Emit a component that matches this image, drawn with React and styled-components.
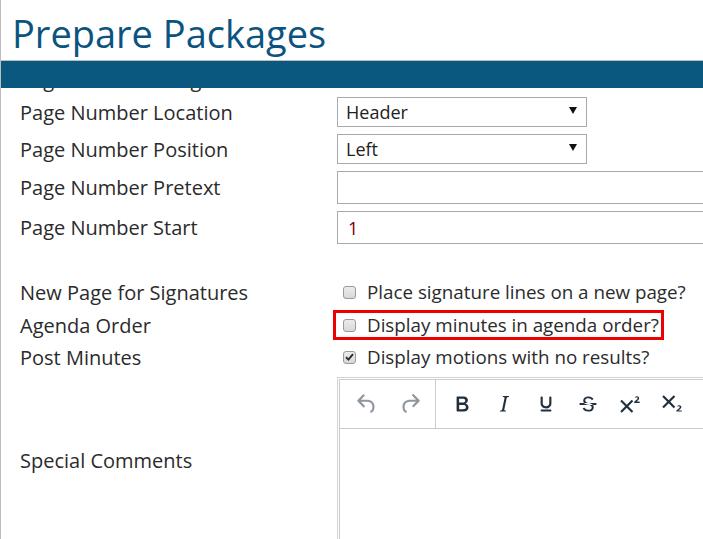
import React from "react";
import styled, { createGlobalStyle } from "styled-components";

const GlobalStyle = createGlobalStyle`
  html, body {
    margin: 0;
    padding: 0;
    background: #fff;
    overflow: hidden;
  }
  body {
    font-family: "Open Sans", "Noto Sans", sans-serif;
  }
`;

const Page = styled.div`
  height: 539px;
  border-left: 1px solid #bdbdbd;
  display: flex;
  flex-direction: column;
  overflow: hidden;
`;

const Header = styled.div`
  height: 60px;
  padding-left: 11px;
  box-sizing: border-box;
`;

const Title = styled.h1`
  margin: 0;
  padding-top: 7px;
  font-size: 38px;
  font-weight: 400;
  line-height: 52px;
  color: #0b5480;
  white-space: nowrap;
`;

const Bar = styled.div`
  height: 27px;
  flex: none;
  border-top: 1px solid #bdbdbd;
  background: #0a5780;
  position: relative;
  z-index: 1;
`;

const Scroll = styled.div`
  flex: 1;
  overflow: hidden;
`;

const Form = styled.div`
  margin-top: -24px;
  padding-left: 19px;
`;

const Row = styled.div`
  display: grid;
  grid-template-columns: 317px 1fr;
  grid-template-rows: ${(p) => p.$h}px;
  align-items: center;
  height: ${(p) => p.$h}px;
  margin-bottom: ${(p) => p.$gap || 0}px;
`;

const Label = styled.div`
  font-size: 20px;
  color: #2b2b2b;
  white-space: nowrap;
`;

const SelectBox = styled.div`
  width: 250px;
  height: 30px;
  box-sizing: border-box;
  border: 1px solid #a9a9a9;
  display: flex;
  align-items: center;
  justify-content: space-between;
  padding: 0 9px 0 8px;
  font-size: 18px;
  color: #222;
`;

const Caret = styled.span`
  width: 0;
  height: 0;
  border-left: 4px solid transparent;
  border-right: 4px solid transparent;
  border-top: 7px solid #111;
  margin-top: -4px;
`;

const TextInput = styled.input`
  width: 420px;
  height: 33px;
  box-sizing: border-box;
  border: 1px solid #a9a9a9;
  padding: 0 10px;
  font-family: "Open Sans", sans-serif;
  font-size: 18px;
  color: #7a0000;
  outline: none;
`;

const Option = styled.label`
  display: inline-flex;
  align-items: center;
  gap: 11px;
  justify-self: start;
  height: 30px;
  box-sizing: border-box;
  margin-left: -4px;
  padding: 0 2px 0 7px;
  border: 3px solid ${(p) => (p.$highlight ? "#ec0000" : "transparent")};
  font-size: 18.8px;
  color: #2b2b2b;
  white-space: nowrap;
`;

const Box = styled.span`
  width: 13px;
  height: 13px;
  box-sizing: border-box;
  border: 1px solid #9a9a9a;
  border-radius: 3px;
  background: linear-gradient(#ececec, #d8d8d8);
  display: flex;
  align-items: center;
  justify-content: center;
  flex: none;
`;

const Editor = styled.div`
  align-self: start;
  margin-top: 4px;
  height: 170px;
  width: 420px;
  box-sizing: border-box;
  border: 1px solid #d3d3d3;
  border-bottom: 0;
  padding: 1px 0 0 1px;
`;

const Toolbar = styled.div`
  display: flex;
  height: 50px;
  box-sizing: border-box;
  border: 1px solid #ccc;
`;

const Group = styled.div`
  display: flex;
  align-items: center;
  padding: 0 4px 0 5px;
  border-right: ${(p) => (p.$sep ? "1px solid #ccc" : "none")};
`;

const ToolButton = styled.button`
  width: ${(p) => (p.$narrow ? 42 : 43)}px;
  height: 34px;
  border: 0;
  padding: 0;
  background: none;
  display: flex;
  align-items: center;
  justify-content: center;
  color: ${(p) => (p.$disabled ? "#8f969d" : "#222f3e")};
  svg {
    width: 26px;
    height: 26px;
    fill: currentColor;
  }
`;

const EditorBody = styled.div`
  height: 120px;
  border-left: 1px solid #ccc;
`;

const icons = {
  undo: "M6.4 8H12c3.7 0 6.2 2 6.8 5.1.6 2.7-.4 5.6-2.3 6.8a1 1 0 0 1-1-1.8c1.1-.6 1.8-2.7 1.4-4.6-.5-2.2-2.2-3.5-4.9-3.5H6.4l3.3 3.3a1 1 0 1 1-1.4 1.4l-5-5a1 1 0 0 1 0-1.4l5-5a1 1 0 0 1 1.4 1.4L6.4 8z",
  redo: "M17.6 10H12c-2.8 0-4.4 1.4-4.9 3.5-.4 2 .3 4 1.4 4.6a1 1 0 1 1-1 1.8c-2-1.2-2.9-4.1-2.3-6.8.6-3 3-5.1 6.8-5.1h5.6l-3.3-3.3a1 1 0 1 1 1.4-1.4l5 5a1 1 0 0 1 0 1.4l-5 5a1 1 0 0 1-1.4-1.4l3.3-3.3z",
  bold: "M7.8 19c-.3 0-.5 0-.6-.2l-.2-.5V5.7c0-.2 0-.4.2-.5l.6-.2h5c1.5 0 2.7.3 3.5 1 .7.6 1.1 1.4 1.1 2.5a3 3 0 0 1-.6 1.9c-.4.6-1 1-1.6 1.2.4.1.9.3 1.3.6s.8.7 1 1.2c.4.4.5 1 .5 1.6 0 1.3-.4 2.3-1.3 3-.8.7-2.1 1-3.8 1H7.8zm5-8.3c.6 0 1.2-.1 1.6-.5.4-.3.6-.7.6-1.3 0-1.1-.8-1.7-2.3-1.7H9.3v3.5h3.4zm.5 6c.7 0 1.3-.1 1.7-.4.4-.4.6-.9.6-1.5s-.2-1-.7-1.4c-.4-.3-1-.4-2-.4H9.4v3.8h4z",
  italic: "M16.7 4.7l-.1.9h-.3c-.6 0-1 0-1.4.3-.3.3-.4.6-.5 1.1l-2.1 9.8v.6c0 .5.4.8 1.4.8h.2l-.2.8H8l.2-.8h.2c1.1 0 1.8-.5 2-1.5l2-9.8.1-.5c0-.6-.4-.8-1.4-.8h-.3l.2-.9h5.8z",
  underline: "M16 5c.6 0 1 .4 1 1v5.5a4 4 0 0 1-.4 1.8l-1 1.4a5.3 5.3 0 0 1-5.5 1 5 5 0 0 1-1.6-1c-.5-.4-.8-.9-1.1-1.4a4 4 0 0 1-.4-1.8V6c0-.6.4-1 1-1s1 .4 1 1v5.5c0 .3 0 .6.2 1l.6.7a3.3 3.3 0 0 0 2.2.8 3.4 3.4 0 0 0 2.2-.8c.3-.2.4-.5.6-.8l.2-.9V6c0-.6.4-1 1-1zM8 17h8c.6 0 1 .4 1 1s-.4 1-1 1H8a1 1 0 0 1 0-2z",
  strike: "M15.6 8.5c-.5-.7-1-1.1-1.3-1.3-.6-.4-1.3-.6-2-.6-2.7 0-2.8 1.7-2.8 2.1 0 1.6 1.8 2 3.2 2.3 4.4.9 4.6 2.8 4.6 3.9 0 1.4-.7 4.1-5 4.1A6.2 6.2 0 0 1 7 16.4l1.5-1.1c.4.6 1.6 2 3.7 2 1.6 0 2.5-.4 3-1.2.4-.8.3-2-.8-2.6-.7-.4-1.6-.7-2.9-1-1-.2-3.9-.8-3.9-3.6C7.6 6 10.3 5 12.4 5c2.9 0 4.2 1.6 4.7 2.4l-1.5 1.1zM5 11h14a1 1 0 0 1 0 2H5a1 1 0 0 1 0-2z",
  sup: "M15 9.4L10.4 14l4.6 4.6-1.4 1.4L9 15.4 4.4 20 3 18.6 7.6 14 3 9.4 4.4 8 9 12.6 13.6 8 15 9.4zm5.9 1.6h-5v-1l1-.9 1.7-1.6.3-.5.1-.5c0-.2 0-.4-.2-.5a.7.7 0 0 0-.5-.2l-.6.1-.5.4-.6-.6c.2-.2.5-.5.8-.6a2.4 2.4 0 0 1 1-.2l.9.1.6.4.4.5.1.7-.1.8-.4.6-.5.5-1.4 1.2h2.9v1.3z",
  sub: "M10.4 10l4.6 4.6-1.4 1.4L9 11.4 4.4 16 3 14.6 7.6 10 3 5.4 4.4 4 9 8.6 13.6 4 15 5.4 10.4 10zM21 19h-5v-1l1-.8 1.7-1.6.3-.4.1-.5-.1-.5a.7.7 0 0 0-.5-.2l-.6.1-.5.4-.6-.6c.2-.3.5-.5.8-.6a2.4 2.4 0 0 1 1-.2c.4 0 .7 0 .9.2l.6.3.4.5.1.7c0 .3 0 .6-.2.9l-.4.5-.5.5-1.5 1.3H21v1.2z",
};

const Icon = ({ name }) => (
  <svg viewBox="0 0 24 24">
    <path d={icons[name]} fillRule="evenodd" />
  </svg>
);

const Check = ({ checked }) => (
  <Box>
    {checked && (
      <svg width="9" height="8" viewBox="0 0 9 8">
        <path d="M1 4.2 3.4 6.6 8 1.2" fill="none" stroke="#2b2b2b" strokeWidth="1.9" />
      </svg>
    )}
  </Box>
);

const formatting = ["bold", "italic", "underline", "strike", "sup", "sub"];

export default function App() {
  return (
    <>
      <GlobalStyle />
      <Page>
        <Header>
          <Title>Prepare Packages</Title>
        </Header>
        <Bar />
        <Scroll>
          <Form>
            <Row $h={30} $gap={3}>
              <Label>Page Number Margin</Label>
            </Row>
            <Row $h={30} $gap={7}>
              <Label>Page Number Location</Label>
              <SelectBox>
                Header <Caret />
              </SelectBox>
            </Row>
            <Row $h={30} $gap={7}>
              <Label>Page Number Position</Label>
              <SelectBox>
                Left <Caret />
              </SelectBox>
            </Row>
            <Row $h={33} $gap={7}>
              <Label>Page Number Pretext</Label>
              <TextInput defaultValue="" />
            </Row>
            <Row $h={33} $gap={32}>
              <Label>Page Number Start</Label>
              <TextInput defaultValue="1" />
            </Row>
            <Row $h={32} $gap={1}>
              <Label>New Page for Signatures</Label>
              <Option>
                <Check /> Place signature lines on a new page?
              </Option>
            </Row>
            <Row $h={32}>
              <Label>Agenda Order</Label>
              <Option $highlight>
                <Check /> Display minutes in agenda order?
              </Option>
            </Row>
            <Row $h={32}>
              <Label>Post Minutes</Label>
              <Option>
                <Check checked /> Display motions with no results?
              </Option>
            </Row>
            <Row $h={174}>
              <Label>Special Comments</Label>
              <Editor>
                <Toolbar>
                  <Group $sep>
                    <ToolButton $disabled>
                      <Icon name="undo" />
                    </ToolButton>
                    <ToolButton $disabled>
                      <Icon name="redo" />
                    </ToolButton>
                  </Group>
                  <Group>
                    {formatting.map((name) => (
                      <ToolButton key={name} $narrow>
                        <Icon name={name} />
                      </ToolButton>
                    ))}
                  </Group>
                </Toolbar>
                <EditorBody />
              </Editor>
            </Row>
          </Form>
        </Scroll>
      </Page>
    </>
  );
}
